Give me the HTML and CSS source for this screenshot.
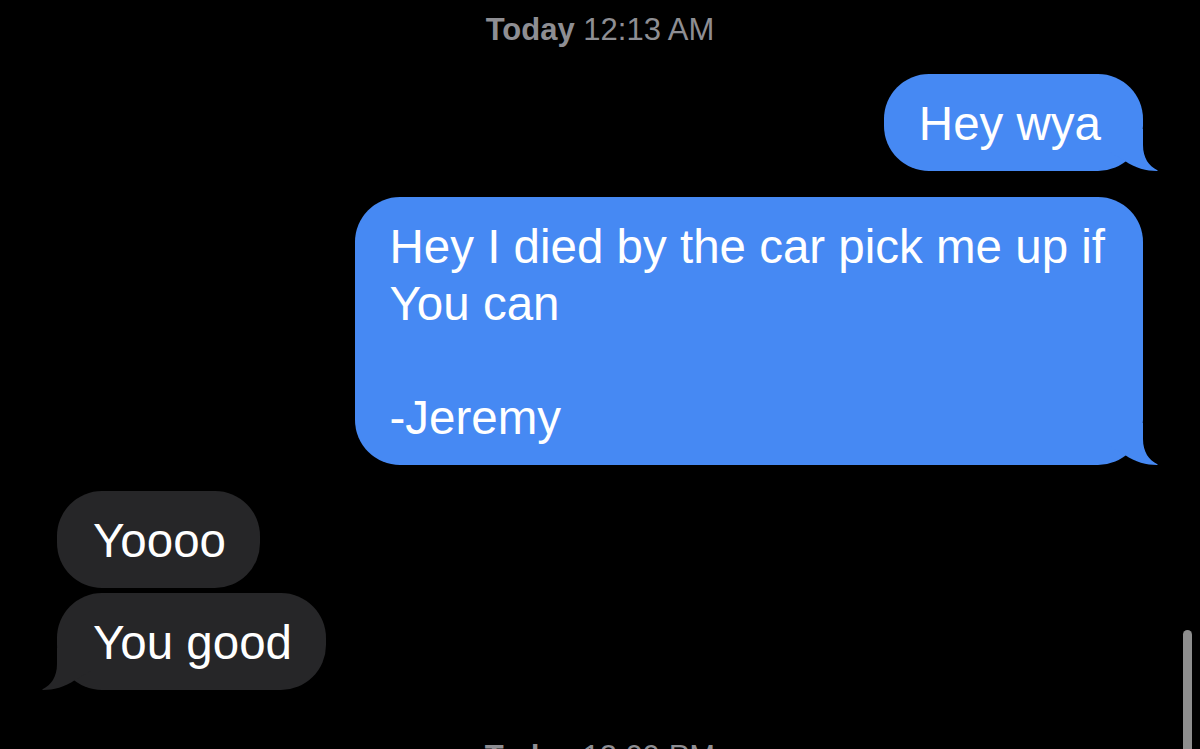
FILE: index.html
```html
<!DOCTYPE html>
<html lang="en">
<head>
<meta charset="utf-8">
<title>Messages</title>
<link rel="stylesheet" href="styles.css">
</head>
<body>
<div class="chat">
  <div class="stamp"><span class="stamp-day">Today</span> 12:13 AM</div>

  <div class="row row-sent">
    <div class="bubble bubble-sent bubble-short">Hey wya<svg class="tail tail-sent" viewBox="0 0 50 42" aria-hidden="true"><path d="M0 0H35V16C35 29 41 37 49 41C50 41.5 49.8 42 48.6 42C39 42 27 39 17 32L0 22Z"/></svg></div>
  </div>

  <div class="row row-sent">
    <div class="bubble bubble-sent">Hey I died by the car pick me up if<br>You can<br><br>-Jeremy<svg class="tail tail-sent" viewBox="0 0 50 42" aria-hidden="true"><path d="M0 0H35V16C35 29 41 37 49 41C50 41.5 49.8 42 48.6 42C39 42 27 39 17 32L0 22Z"/></svg></div>
  </div>

  <div class="row row-recv">
    <div class="bubble bubble-recv">Yoooo</div>
  </div>

  <div class="row row-recv row-tight">
    <div class="bubble bubble-recv">You good<svg class="tail tail-recv" viewBox="0 0 50 42" aria-hidden="true"><path d="M0 0H35V16C35 29 41 37 49 41C50 41.5 49.8 42 48.6 42C39 42 27 39 17 32L0 22Z"/></svg></div>
  </div>

  <div class="stamp stamp-next"><span class="stamp-day">Today</span> 12:09 PM</div>
</div>
<div class="scrollbar"></div>
</body>
</html>
```

FILE: styles.css
```css
html, body {
  margin: 0;
  padding: 0;
  background: #000;
  height: 749px;
  overflow: hidden;
}

body {
  font-family: "Liberation Sans", Arial, sans-serif;
  color: #fff;
  position: relative;
}

.chat {
  display: flex;
  flex-direction: column;
  padding: 11px 57px 0 57px;
}

.stamp {
  text-align: center;
  font-size: 31px;
  line-height: 37px;
  color: #8e8e93;
  margin-bottom: 26px;
}

.stamp-day {
  font-weight: bold;
}

.stamp-next {
  margin-top: 48px;
}

.row {
  display: flex;
  margin-bottom: 26px;
}

.row-sent {
  justify-content: flex-end;
}

.row-recv {
  justify-content: flex-start;
}

.row-tight {
  margin-top: -21px;
  margin-bottom: 0;
}

.bubble {
  position: relative;
  font-size: 47.5px;
  line-height: 57px;
  padding: 21px 38px 19px 35px;
  border-radius: 45px;
  white-space: nowrap;
}

.bubble-short {
  padding-right: 42px;
}

.bubble-sent {
  background: #4689f3;
}

.bubble-recv {
  background: #262628;
  padding: 21px 34px 19px 36px;
}

.tail {
  position: absolute;
  bottom: 0;
  width: 50px;
  height: 42px;
  display: block;
}

.tail-sent {
  right: -15px;
  fill: #4689f3;
}

.tail-recv {
  left: -15px;
  fill: #262628;
  transform: scaleX(-1);
}

.scrollbar {
  position: absolute;
  top: 630px;
  right: 8px;
  width: 9px;
  height: 130px;
  border-radius: 5px 5px 0 0;
  background: #8e8e8e;
}
```
